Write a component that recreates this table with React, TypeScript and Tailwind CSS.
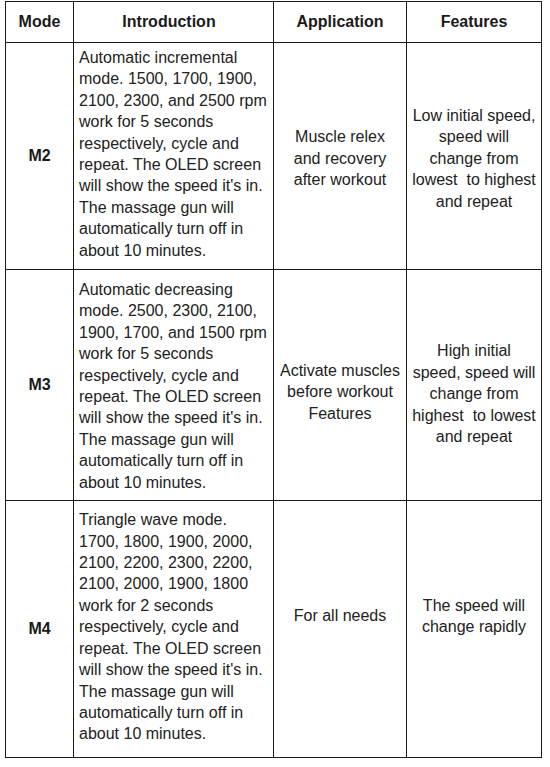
type Row = {
  mode: string;
  intro: string[];
  application: string[];
  features: string[];
  height: string;
  introPad: string;
  appPad: string;
  featPad: string;
};

const rows: Row[] = [
  {
    mode: "M2",
    intro: [
      "Automatic incremental",
      "mode. 1500, 1700, 1900,",
      "2100, 2300, and 2500 rpm",
      "work for 5 seconds",
      "respectively, cycle and",
      "repeat. The OLED screen",
      "will show the speed it's in.",
      "The massage gun will",
      "automatically turn off in",
      "about 10 minutes.",
    ],
    application: ["Muscle relex", "and recovery", "after workout"],
    features: ["Low initial speed,", "speed will", "change from", "lowest  to highest", "and repeat"],
    height: "h-[227px]",
    introPad: "pb-[4px]",
    appPad: "pt-[5px]",
    featPad: "pt-[5px]",
  },
  {
    mode: "M3",
    intro: [
      "Automatic decreasing",
      "mode. 2500, 2300, 2100,",
      "1900, 1700, and 1500 rpm",
      "work for 5 seconds",
      "respectively, cycle and",
      "repeat. The OLED screen",
      "will show the speed it's in.",
      "The massage gun will",
      "automatically turn off in",
      "about 10 minutes.",
    ],
    application: ["Activate muscles", "before workout", "Features"],
    features: ["High initial", "speed, speed will", "change from", "highest  to lowest", "and repeat"],
    height: "h-[231px]",
    introPad: "pt-[2px]",
    appPad: "pt-[14px]",
    featPad: "pt-[18px]",
  },
  {
    mode: "M4",
    intro: [
      "Triangle wave mode.",
      "1700, 1800, 1900, 2000,",
      "2100, 2200, 2300, 2200,",
      "2100, 2000, 1900, 1800",
      "work for 2 seconds",
      "respectively, cycle and",
      "repeat. The OLED screen",
      "will show the speed it's in.",
      "The massage gun will",
      "automatically turn off in",
      "about 10 minutes.",
    ],
    application: ["For all needs"],
    features: ["The speed will", "change rapidly"],
    height: "h-[257px]",
    introPad: "pb-[4px]",
    appPad: "pb-[26px]",
    featPad: "pb-[26px]",
  },
];

function Lines({ lines }: { lines: string[] }): React.ReactElement {
  return (
    <>
      {lines.map((line, i) => (
        <span className="block whitespace-pre" key={i}>
          {line}
        </span>
      ))}
    </>
  );
}

const headers = [
  { label: "Mode", pad: "" },
  { label: "Introduction", pad: "pr-[9px]" },
  { label: "Application", pad: "" },
  { label: "Features", pad: "" },
];

export default function App(): React.ReactElement {
  return (
    <div className="min-h-[767px] bg-white pl-[5px] pt-[1px] font-['Liberation_Sans',Arial,sans-serif] text-[16px] leading-[21.4px] text-[#222]">
      <table className="table-fixed border-collapse">
        <colgroup>
          <col className="w-[68px]" />
          <col className="w-[200px]" />
          <col className="w-[133px]" />
          <col className="w-[135px]" />
        </colgroup>
        <thead>
          <tr className="h-[41px]">
            {headers.map((h) => (
              <th
                className={`border border-[#1a1a1a] text-center align-middle font-bold text-[#1a1a1a] ${h.pad}`}
                key={h.label}
              >
                {h.label}
              </th>
            ))}
          </tr>
        </thead>
        <tbody>
          {rows.map((row) => (
            <tr className={row.height} key={row.mode}>
              <td className="border border-[#1a1a1a] text-center align-middle font-bold text-[#1a1a1a]">
                {row.mode}
              </td>
              <td className={`border border-[#1a1a1a] pl-[5px] align-middle ${row.introPad}`}>
                <Lines lines={row.intro} />
              </td>
              <td className={`border border-[#1a1a1a] text-center align-middle ${row.appPad}`}>
                <Lines lines={row.application} />
              </td>
              <td className={`border border-[#1a1a1a] text-center align-middle ${row.featPad}`}>
                <Lines lines={row.features} />
              </td>
            </tr>
          ))}
        </tbody>
      </table>
    </div>
  );
}
